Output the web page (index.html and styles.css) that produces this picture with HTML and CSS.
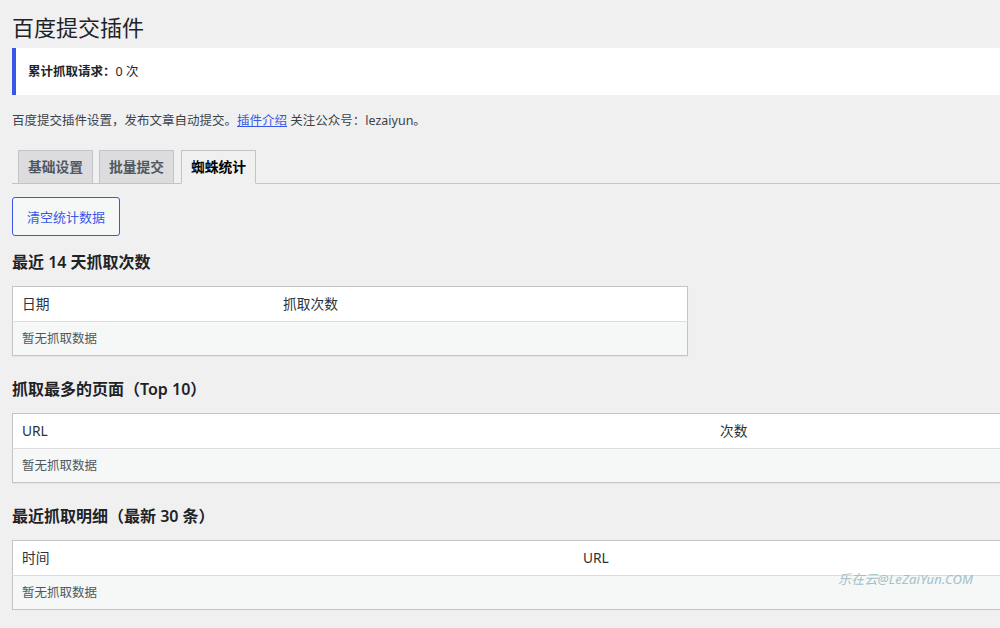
FILE: index.html
```html
<!DOCTYPE html>
<html lang="zh-CN">
<head>
    <meta charset="UTF-8">
    <meta name="viewport" content="width=device-width, initial-scale=1.0">
    <title>百度提交插件</title>
    <link rel="stylesheet" href="styles.css">
</head>
<body>
    <div class="wrap">
        <h1>百度提交插件</h1>

        <div class="notice">
            <p><strong>累计抓取请求：</strong>0 次</p>
        </div>

        <p class="desc">百度提交插件设置，发布文章自动提交。<a href="#">插件介绍</a> 关注公众号：lezaiyun。</p>

        <nav class="nav-tabs">
            <a class="nav-tab" href="#">基础设置</a>
            <a class="nav-tab" href="#">批量提交</a>
            <a class="nav-tab active" href="#">蜘蛛统计</a>
        </nav>

        <button class="button">清空统计数据</button>

        <h2>最近 14 天抓取次数</h2>
        <table class="widefat small">
            <thead>
                <tr><th class="col-days">日期</th><th>抓取次数</th></tr>
            </thead>
            <tbody>
                <tr><td colspan="2">暂无抓取数据</td></tr>
            </tbody>
        </table>

        <h2>抓取最多的页面（Top 10）</h2>
        <table class="widefat">
            <thead>
                <tr><th class="col-url">URL</th><th>次数</th></tr>
            </thead>
            <tbody>
                <tr><td colspan="2">暂无抓取数据</td></tr>
            </tbody>
        </table>

        <h2>最近抓取明细（最新 30 条）</h2>
        <table class="widefat">
            <thead>
                <tr><th class="col-time">时间</th><th>URL</th></tr>
            </thead>
            <tbody>
                <tr><td colspan="2">暂无抓取数据</td></tr>
            </tbody>
        </table>
    </div>

    <div class="watermark">乐在云@LeZaiYun.COM</div>
</body>
</html>
```

FILE: styles.css
```css
html, body {
    overflow-x: hidden;
}

body {
    margin: 0;
    background: #f0f0f1;
    color: #3c434a;
    font-family: "Noto Sans", "Noto Sans CJK SC", sans-serif;
    font-size: 12.5px;
    line-height: 1.5;
}

.wrap {
    margin: 0 -30px 0 12px;
    padding-top: 12px;
}

h1 {
    margin: 0;
    font-size: 22px;
    font-weight: 400;
    line-height: 30px;
    color: #1d2327;
}

.notice {
    margin-top: 6px;
    background: #fff;
    border-left: 4px solid #3858e9;
    padding: 14px 12px;
}

.notice p {
    margin: 0;
    line-height: 19px;
    color: #1d2327;
}

.notice strong {
    font-weight: 700;
}

.desc {
    margin: 16px 0 0;
    line-height: 20px;
}

.desc a {
    color: #3858e9;
    text-decoration: underline;
}

.nav-tabs {
    display: flex;
    margin-top: 19px;
    border-bottom: 1px solid #c3c4c7;
    padding-left: 6px;
}

.nav-tab {
    margin: 0 6px -1px 0;
    padding: 5px 9px;
    line-height: 22px;
    font-size: 13.75px;
    font-weight: 600;
    color: #50575e;
    text-decoration: none;
    background: #dcdcde;
    border: 1px solid #c3c4c7;
}

.nav-tab.active {
    margin-left: 1px;
    background: #f0f0f1;
    color: #000;
    border-bottom-color: #f0f0f1;
}

.button {
    display: block;
    margin-top: 13px;
    height: 39px;
    padding: 0 14px;
    font-family: inherit;
    font-size: 13px;
    color: #3858e9;
    background: #f6f7f7;
    border: 1px solid #3858e9;
    border-radius: 3px;
    cursor: pointer;
}

h2 {
    margin: 15px 0 13px;
    font-size: 16px;
    line-height: 22px;
    font-weight: 600;
    color: #1d2327;
}

table + h2 {
    margin-top: 22px;
}

.widefat {
    width: 100%;
    border-collapse: collapse;
    background: #fff;
    border: 1px solid #c3c4c7;
    box-shadow: 0 1px 1px rgba(0, 0, 0, .04);
}

.widefat.small {
    width: 676px;
}

.widefat th {
    text-align: left;
    font-weight: 400;
    font-size: 13.75px;
    color: #2c3338;
    padding: 6px 9px;
    line-height: 22px;
    border-bottom: 1px solid #dcdcde;
}

.widefat td {
    background: #f6f7f7;
    padding: 6px 9px;
    line-height: 21px;
    color: #50575e;
}

.col-days {
    width: 243px;
}

.col-url {
    width: 680px;
}

.col-time {
    width: 543px;
}

.watermark {
    position: absolute;
    left: 838px;
    top: 570px;
    font-size: 13px;
    font-style: italic;
    color: #9fc2c6;
    letter-spacing: 0.2px;
}
```
